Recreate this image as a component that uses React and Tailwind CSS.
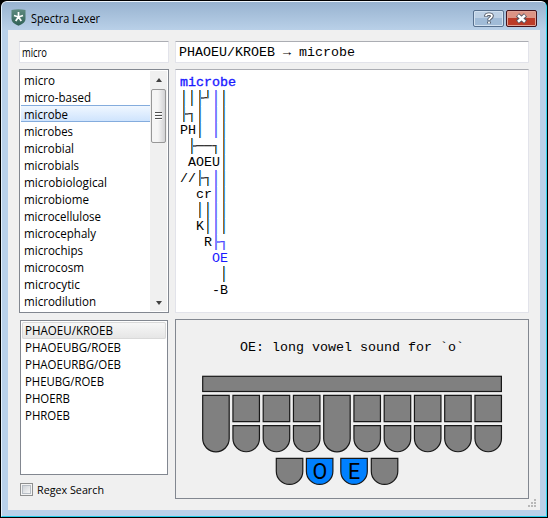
import React from "react";

const ui = "font-['Open_Sans',sans-serif]";
const words = [
  ["micro", 31], ["micro-based", 67], ["microbe", 44], ["microbes", 49], ["microbial", 50], ["microbials", 55],
  ["microbiological", 83], ["microbiome", 65], ["microcellulose", 77], ["microcephaly", 72],
  ["microchips", 59], ["microcosm", 60], ["microcytic", 56], ["microdilution", 72],
];
const strokes = [
  ["PHAOEU/KROEB", 88], ["PHAOEUBG/ROEB", 96], ["PHAOEURBG/OEB", 96], ["PHEUBG/ROEB", 79], ["PHOERB", 45], ["PHROEB", 45],
];

// Horizontally condensed label whose rendered width is fixed
function Label({ text, width, size = 12, y = 13 }) {
  return (
    <svg className="block overflow-visible" width={width} height="17">
      <text x="0" y={y} fontSize={size} textLength={width} lengthAdjust="spacingAndGlyphs" className={ui}>{text}</text>
    </svg>
  );
}

const H = ({ children }) => <span className="text-[#1a1aff]">{children}</span>;

// Vertical connectors: [column, top, height, highlighted]
const bars = [
  [0, 16, 32], [1, 16, 16], [1, 40, 8], [2, 16, 48], [3, 16, 8], [4, 16, 48, true], [5, 16, 144], [1, 64, 16],
  [4, 72, 8], [2, 96, 16], [3, 104, 8], [4, 96, 80, true],
  [2, 128, 16], [3, 128, 32], [5, 168, 8, true], [5, 192, 16],
];

function Outline() {
  return (
    <div className="relative pl-1 pt-[5px]">
      <pre className="font-['Liberation_Mono',monospace] text-[13.33px] leading-4 text-black">
        <div className="h-4"><span className="text-[#1a1aff] [-webkit-text-stroke:0.35px_#1a1aff]">microbe</span></div>
        <div className="h-4">││├┘││</div>
        <div className="h-4">├┐│ ││</div>
        <div className="h-4">PH│ ││</div>
        <div className="h-4"> ├──┐│</div>
        <div className="h-4"> AOEU│</div>
        <div className="h-4">//├┐││</div>
        <div className="h-4">  cr││</div>
        <div className="h-4">  ││││</div>
        <div className="h-4">  K│││</div>
        <div className="h-4">   R<H>├┐</H></div>
        <div className="h-4">    <H>OE</H></div>
        <div className="h-4">     │</div>
        <div className="h-4">    -B</div>
      </pre>
      <svg className="absolute left-1 top-[4px]" width="48" height="224" shapeRendering="crispEdges">
        {bars.map(([c, y, h, hot], i) => (
          <g key={i}>
            <rect x={c * 8 + 3} y={y} width="1" height={h} fill={hot ? "#a574ff" : "#a2671f"} />
            <rect x={c * 8 + 4} y={y} width="1" height={h} fill={hot ? "#6b8cff" : "#3d98ea"} />
          </g>
        ))}
      </svg>
    </div>
  );
}

function Key({ x, y, h = 26, round = true, fill = "#808080", letter }) {
  const r = 13.2;
  const d = round
    ? `M${x} ${y}h26.5v${h - r}a13.25 13.25 0 0 1-26.5 0z`
    : `M${x} ${y}h26.5v${h}h-26.5z`;
  return (
    <g>
      <path d={d} fill={fill} stroke="#181818" strokeWidth="1.2" />
      {letter && <text x={x + 13.4} y={y + 20.4} fontSize="21.5" textAnchor="middle" className="font-[Roboto,sans-serif]">{letter}</text>}
    </g>
  );
}

function Keyboard() {
  const cols = Array.from({ length: 10 }, (_, i) => 26.7 + i * 30.25);
  return (
    <svg width="352" height="178" className="absolute left-0 top-0">
      <rect x="26.7" y="56.3" width="298.7" height="15.2" fill="#808080" stroke="#181818" strokeWidth="1.2" />
      {cols.map((x, i) =>
        i === 0 || i === 4 ? (
          <Key key={i} x={x} y={75.4} h={56.4} />
        ) : (
          <React.Fragment key={i}>
            <Key x={x} y={75.4} h={26.2} round={false} />
            <Key x={x} y={105.7} h={26} />
          </React.Fragment>
        )
      )}
      <Key x={100.3} y={138.4} />
      <Key x={130.4} y={138.4} fill="#0080ff" letter="O" />
      <Key x={164.8} y={138.4} fill="#0080ff" letter="E" />
      <Key x={195.3} y={138.4} />
    </svg>
  );
}

export default function App() {
  return (
    <div className={`flex h-[518px] w-[548px] flex-col overflow-hidden bg-black p-px text-black ${ui}`}>
      <div className="flex h-[516px] w-[546px] flex-col rounded-t-[6px] border border-r-[#35d5ee] border-b-[#22cbe8] border-l-[#e5f2fd] border-t-[#eef5fc] bg-[#b9d1ea]">
        <header className="flex h-7 shrink-0 items-start rounded-t-[5px] bg-linear-to-b from-[#98b3d0] to-[#b9d0e8] pl-[9px] pr-[9px]">
          <svg width="15" height="17" viewBox="0 0 15 17" className="mt-[7px]">
            <defs>
              <linearGradient id="shield" x1="0" y1="0" x2="0" y2="1">
                <stop offset="0" stopColor="#5f8b80" />
                <stop offset="1" stopColor="#2f6156" />
              </linearGradient>
            </defs>
            <path d="M.5 1Q7.500 -.3 14.500 1v9q0 4-7 6.700-7-2.700-7-6.700z" fill="url(#shield)" />
            <path d="M7.500 8V3M7.500 8L3 6.500M7.500 8L12 6.500M7.500 8l-2.800 4M7.500 8l2.800 4" stroke="#fff" strokeWidth="1.700" />
          </svg>
          <div className="ml-[5px] mt-2"><Label text="Spectra Lexer" width={69} /></div>
          <div className="ml-auto mt-2 flex gap-[2px]">
            <div className="flex h-[17px] w-[31px] items-center justify-center rounded-[2px] border border-[#566f8d] bg-linear-to-b from-[#bdd0e4] from-50% to-[#a0bbd7] to-50% shadow-[inset_0_0_0_1px_#d2e1f0]">
              <svg width="10" height="13" viewBox="0 0 10 13" fill="none">
                <path d="M2 4.700V3.700Q2.300 2.200 5 2.200t3 1.600Q8 5 6.500 6T5 8.500M5 9.600v2" stroke="#4d5460" strokeWidth="3.600" />
                <path d="M2 4.200V3.500Q2.300 2.200 5 2.200t3 1.600Q8 5 6.500 6T5 8M5 9.800v1.700" stroke="#fff" strokeWidth="1.800" />
              </svg>
            </div>
            <div className="flex h-[17px] w-[31px] items-center justify-center rounded-[2px] border border-[#42121c] bg-linear-to-b from-[#dc9485] from-45% to-[#bc3b28] to-50% shadow-[inset_0_0_0_1px_#e0a396]">
              <svg width="13" height="11" viewBox="0 0 13 11">
                <path d="M2.500 2l8 7M10.500 2l-8 7" stroke="#53545f" strokeWidth="4.600" />
                <path d="M3 2.300l7 6.400M10 2.300l-7 6.400" stroke="#fff" strokeWidth="2.600" />
              </svg>
            </div>
          </div>
        </header>
        <main className="relative ml-[6px] flex h-[480px] w-[532px] gap-[6px] bg-[#f0f0f0] pl-[11px] pt-[11px]">
          <div className="flex w-[150px] flex-col">
            <div className="h-[22px] rounded-[1px] border border-[#e2e3ea] border-t-[#abadb3] bg-white pl-[2px] pt-[2px]">
              <Label text="micro" width={25} size={12} />
            </div>
            <div className="mt-[6px] flex h-[244px] justify-between border border-[#828790] bg-white p-px">
              <div className="w-[130px]">
                {words.map(([w, n], i) => (
                  <div key={w} className={`h-[17px] pl-[3px] ${i === 2 ? "border-y border-[#84acdd] bg-linear-to-b from-[#f0f7ff] to-[#cfe4fd] [&>svg]:-mt-px" : ""}`}>
                    <Label text={w} width={n} y={13.5} />
                  </div>
                ))}
              </div>
              <div className="flex w-[17px] flex-col items-center bg-[#f0f0f0]">
                <div className="flex h-[18px] items-center"><div className="border-x-[3.5px] border-b-4 border-x-transparent border-b-[#404040]" /></div>
                <div className="flex h-[54px] w-[15px] flex-col items-center justify-center gap-px rounded-[2px] border border-[#979797] bg-linear-to-r from-[#f5f5f5] from-45% to-[#d2d2d4]">
                  <div className="h-[2px] w-[7px] border-t border-[#505050] bg-white" />
                  <div className="h-[2px] w-[7px] border-t border-[#505050] bg-white" />
                  <div className="h-[2px] w-[7px] border-t border-[#505050] bg-white" />
                </div>
                <div className="mt-auto flex h-[17px] items-center"><div className="border-x-[3.5px] border-t-4 border-x-transparent border-t-[#404040]" /></div>
              </div>
            </div>
            <div className="ml-px mt-[7px] h-[155px] w-[148px] border border-[#828790] bg-white p-px">
              {strokes.map(([s, n], i) => (
                <div key={s} className={`h-[17px] pl-[3px] ${i === 0 ? "rounded-[2px] bg-linear-to-b from-[#f8f8f8] to-[#e5e5e5] shadow-[inset_0_0_0_1px_#d9d9d9]" : ""}`}>
                  <Label text={s} width={n} />
                </div>
              ))}
            </div>
            <div className="ml-px mt-[7px] flex">
              <div className="mt-px h-[13px] w-[13px] border border-[#8e8f8f] bg-[#f4f4f4] p-px"><div className="h-[9px] w-[9px] border border-[#b8bec5] bg-linear-to-br from-[#cfd3d8] to-[#f6f6f6]" /></div>
              <div className="ml-1"><Label text="Regex Search" width={67} size={11.5} y={12} /></div>
            </div>
          </div>
          <div className="flex w-[354px] flex-col">
            <div className="h-[22px] whitespace-pre rounded-[1px] border border-[#e2e3ea] border-t-[#abadb3] bg-white pl-[3px] pt-[3px] font-['Liberation_Mono',monospace] text-[13.33px] leading-4">PHAOEU/KROEB → microbe</div>
            <div className="mt-[6px] h-[244px] border border-[#e2e3ea] border-t-[#abadb3] bg-white"><Outline /></div>
            <div className="relative mt-[6px] h-[180px] border border-[#828790]">
              <Keyboard />
              <div className="mt-5 whitespace-pre text-center font-['Liberation_Mono',monospace] text-[13.33px] leading-4">OE: long vowel sound for `o`</div>
            </div>
          </div>
          <svg className="absolute bottom-[1px] right-[2px]" width="11" height="11" fill="#b8b8b8">
            <path d="M7 1h2v2h-2zM4 4h2v2h-2zM7 4h2v2h-2zM1 7h2v2h-2zM4 7h2v2h-2zM7 7h2v2h-2z" />
          </svg>
        </main>
      </div>
    </div>
  );
}
